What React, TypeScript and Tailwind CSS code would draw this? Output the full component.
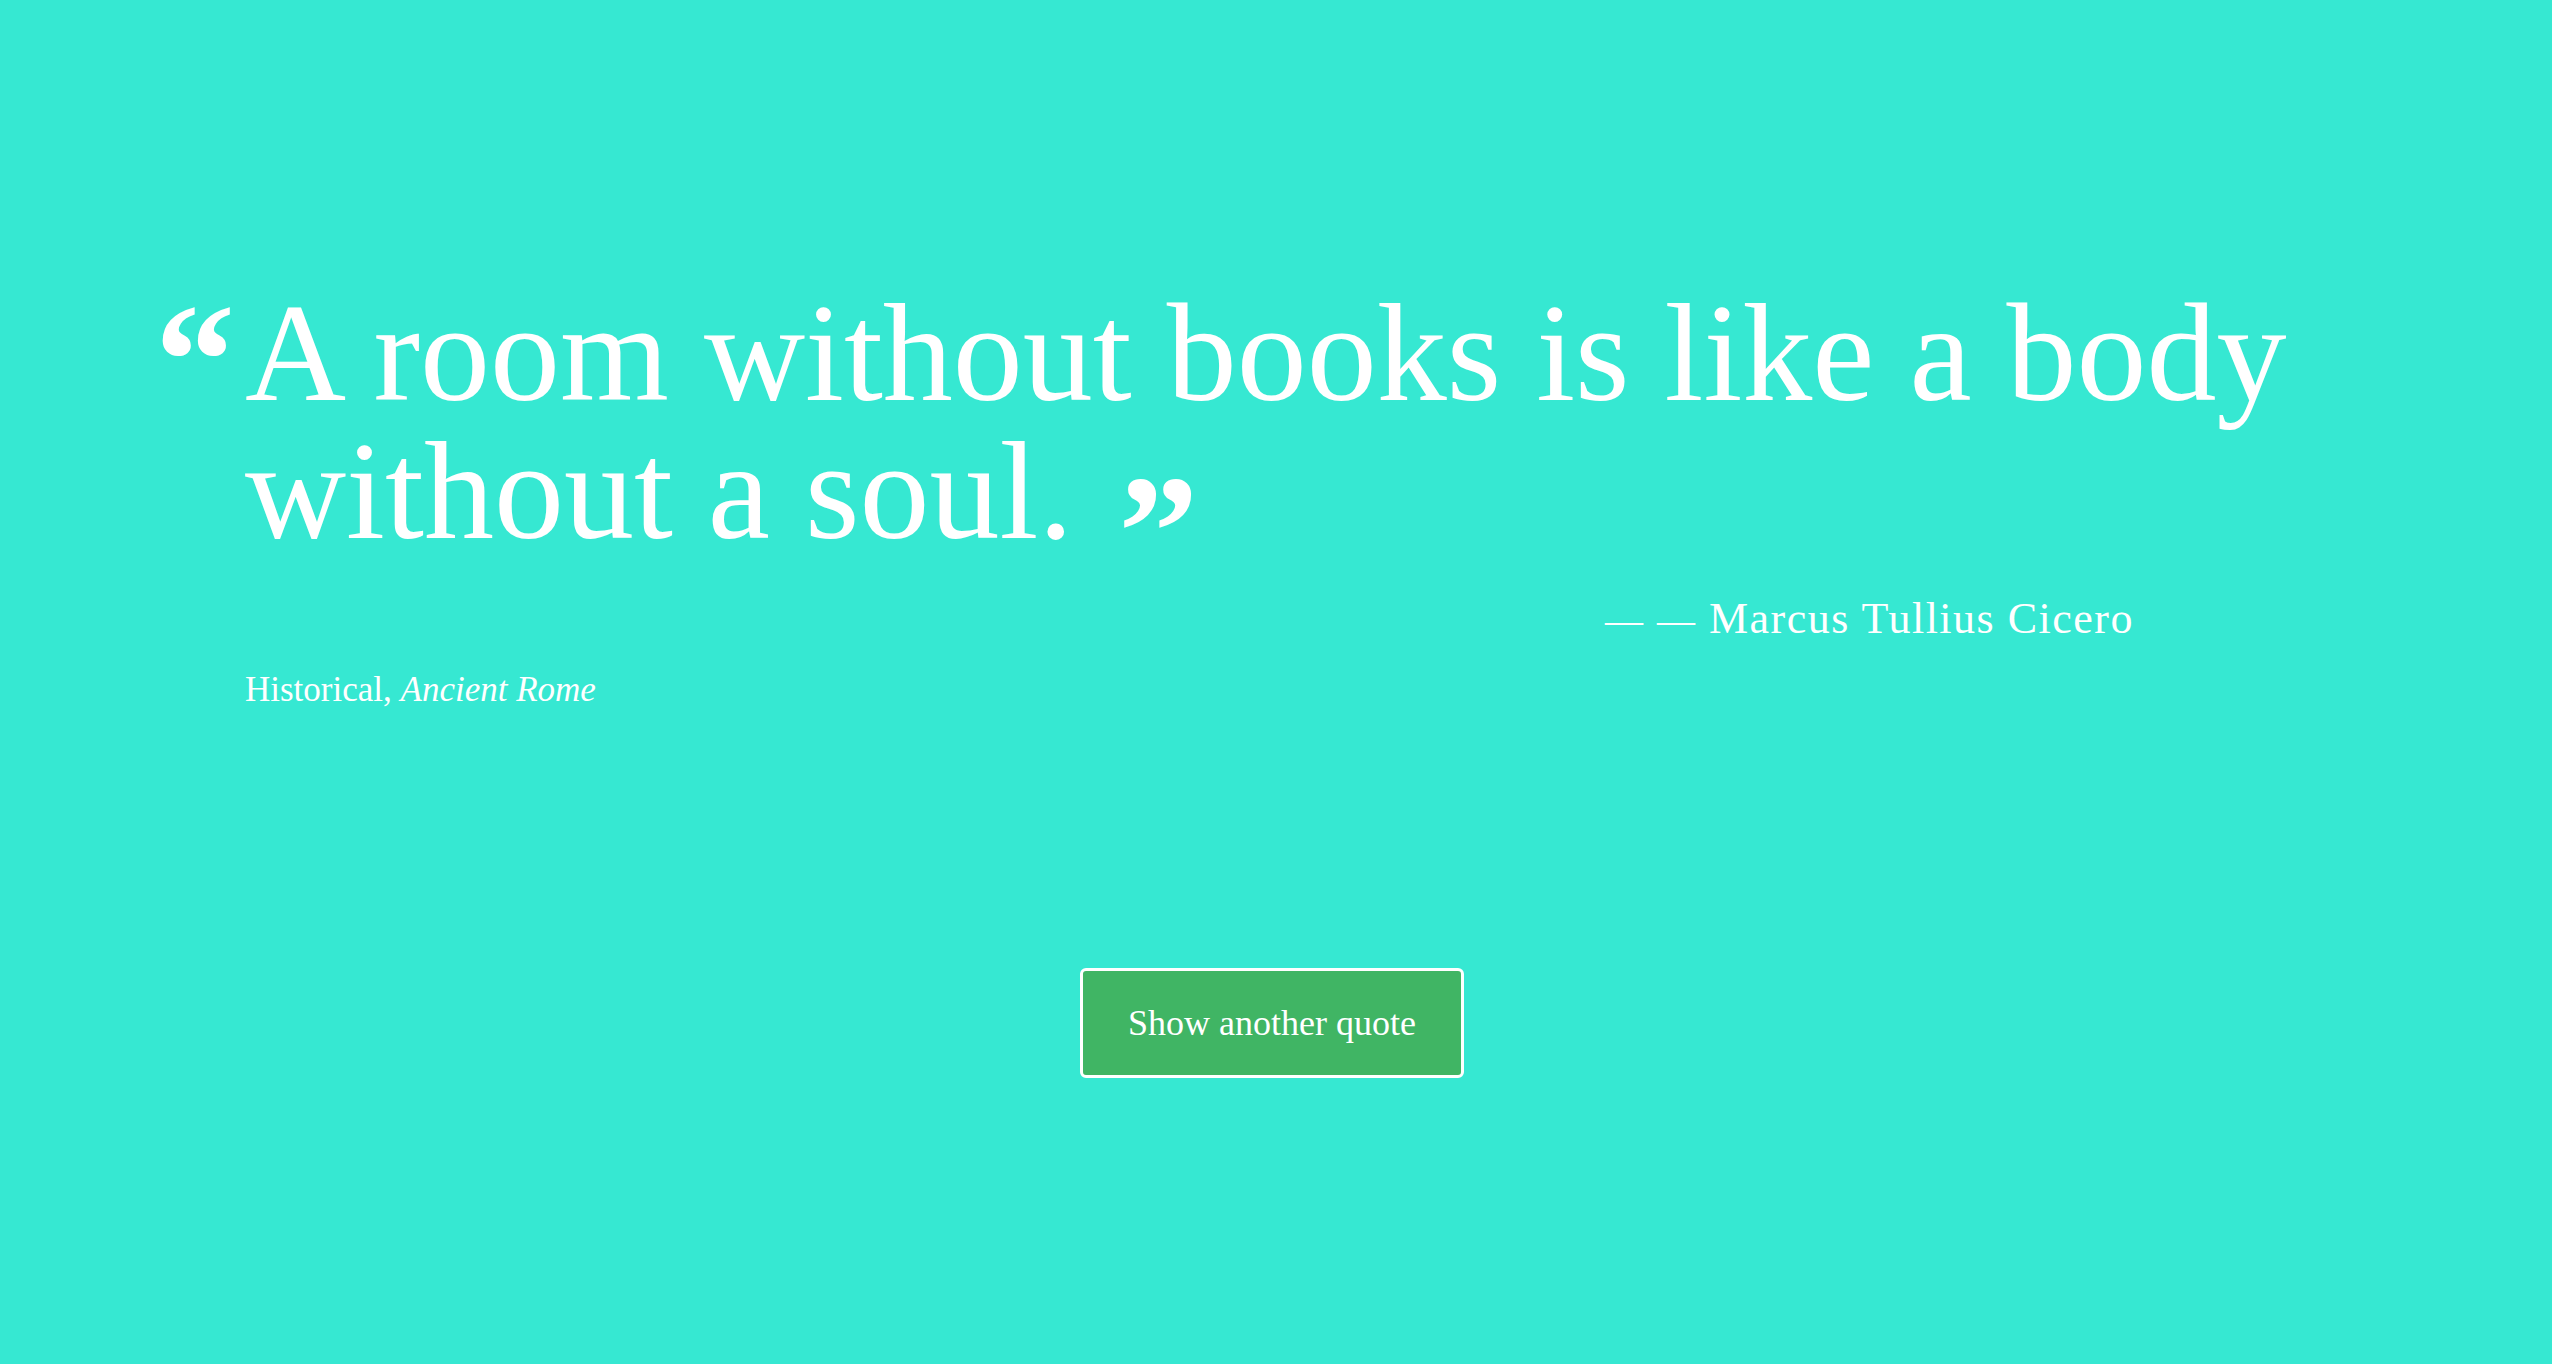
import React from 'react';

const quote = {
  text: 'A room without books is like a body without a soul.',
  author: 'Marcus Tullius Cicero',
  category: 'Historical',
  era: 'Ancient Rome',
};

export default function App() {
  return (
    <div className="min-h-screen bg-[#36e8d2] text-white font-['Liberation_Serif','Times_New_Roman',serif] flex flex-col">
      <blockquote className="flex items-baseline gap-[15px] pl-[155px] pr-[160px] pt-[266px]">
        {/* opening mark */}
        <span className="text-[160px] leading-none font-bold w-[75px] translate-y-[15px]">&ldquo;</span>

        <div className="flex-1">
          <p className="text-[140px] leading-[138px]">
            {quote.text}{' '}
            <span className="ml-[10px] text-[160px] leading-[0] font-bold align-[-48px]">&rdquo;</span>
          </p>

          <div className="mt-[33px] pr-[258px] text-right text-[44px] leading-[52px] tracking-[1.5px]">
            <span className="text-[38px]">—</span> <span className="text-[38px]">—</span> {quote.author}
          </div>

          <div className="mt-[23px] text-[35px] leading-[42px]">
            {quote.category}, <em>{quote.era}</em>
          </div>
        </div>
      </blockquote>

      <button className="self-center mt-[257px] mr-[8px] w-[384px] h-[110px] flex items-center justify-center bg-[#40b564] border-[3px] border-white rounded-[6px] text-[36px]">
        Show another quote
      </button>
    </div>
  );
}
